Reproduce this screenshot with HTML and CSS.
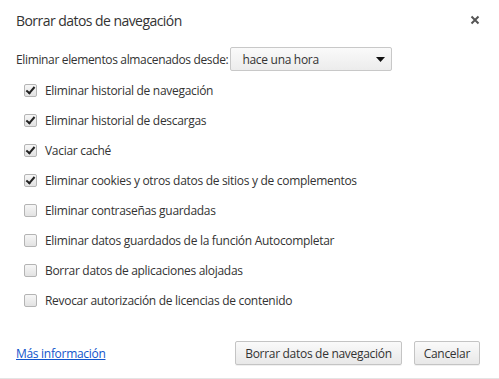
FILE: index.html
```html
<!DOCTYPE html>
<html lang="es">
<head>
    <meta charset="UTF-8">
    <title>Borrar datos de navegación</title>
    <link rel="stylesheet" href="styles.css">
</head>
<body>
<div class="dialog">
    <div class="dialog_header">
        <div class="dialog_title">Borrar datos de navegación</div>
        <div class="close_btn">
            <svg width="10" height="10" viewBox="0 0 10 10">
                <path d="M1.5 1.5 L8.5 8.5 M8.5 1.5 L1.5 8.5" stroke="#555555" stroke-width="2"/>
            </svg>
        </div>
    </div>

    <div class="period_row">
        <span class="period_label">Eliminar elementos almacenados desde:</span>
        <div class="select_box">
            <span>hace una hora</span>
            <svg width="9" height="5" viewBox="0 0 9 5"><path d="M0 0 L9 0 L4.5 5 Z" fill="#111111"/></svg>
        </div>
    </div>

    <div class="check_list">
        <label class="check_row"><span class="check_box checked"></span>Eliminar historial de navegación</label>
        <label class="check_row"><span class="check_box checked"></span>Eliminar historial de descargas</label>
        <label class="check_row"><span class="check_box checked"></span>Vaciar caché</label>
        <label class="check_row"><span class="check_box checked"></span>Eliminar cookies y otros datos de sitios y de complementos</label>
        <label class="check_row"><span class="check_box"></span>Eliminar contraseñas guardadas</label>
        <label class="check_row"><span class="check_box"></span>Eliminar datos guardados de la función Autocompletar</label>
        <label class="check_row"><span class="check_box"></span>Borrar datos de aplicaciones alojadas</label>
        <label class="check_row"><span class="check_box"></span>Revocar autorización de licencias de contenido</label>
    </div>

    <div class="dialog_footer">
        <a href="#" class="more_link">Más información</a>
        <div class="buttons">
            <button class="btn">Borrar datos de navegación</button>
            <button class="btn">Cancelar</button>
        </div>
    </div>
</div>
</body>
</html>
```

FILE: styles.css
```css
html, body {
    margin: 0;
    padding: 0;
    background-color: #ffffff;
}

body {
    font-family: "Open Sans", "Noto Sans", sans-serif;
    font-size: 12px;
    letter-spacing: -0.3px;
    color: #333333;
}

.dialog {
    width: 499px;
    height: 379px;
    box-sizing: border-box;
    padding: 0 19px 0 16px;
    display: flex;
    flex-direction: column;
    border-bottom: 1px solid #e4e4e4;
}

.dialog_header {
    display: flex;
    justify-content: space-between;
    align-items: center;
    height: 40px;
}

.dialog_title {
    font-size: 14px;
    letter-spacing: -0.55px;
    color: #333333;
}

.close_btn {
    width: 10px;
    height: 10px;
    display: flex;
}

.period_row {
    display: flex;
    align-items: center;
    margin-top: 7px;
    height: 24px;
}

.period_label {
    margin-right: 2px;
    letter-spacing: -0.35px;
}

.select_box {
    width: 162px;
    height: 24px;
    box-sizing: border-box;
    border: 1px solid #c8c8c8;
    border-radius: 2px;
    background: linear-gradient(#fafafa, #ececec);
    display: flex;
    align-items: center;
    justify-content: space-between;
    padding: 0 6px 0 11px;
    color: #333333;
}

.check_list {
    display: flex;
    flex-direction: column;
    margin-top: 4px;
    padding-left: 8px;
}

.check_row {
    display: flex;
    align-items: center;
    height: 30px;
}

.check_box {
    width: 13px;
    height: 13px;
    box-sizing: border-box;
    border: 1px solid #b4b4b4;
    border-radius: 2px;
    background: linear-gradient(#f6f6f6, #e2e2e2);
    margin-right: 8px;
    position: relative;
}

.check_box.checked::after {
    content: "";
    position: absolute;
    left: 3px;
    top: 0px;
    width: 3px;
    height: 7px;
    border: solid #222222;
    border-width: 0 2px 2px 0;
    transform: rotate(40deg);
}

.dialog_footer {
    display: flex;
    justify-content: space-between;
    align-items: center;
    margin-top: auto;
    margin-bottom: 13px;
}

.more_link {
    color: #1155cc;
    text-decoration: underline;
}

.buttons {
    display: flex;
    gap: 12px;
}

.btn {
    font-family: "Open Sans", "Noto Sans", sans-serif;
    font-size: 12px;
    letter-spacing: -0.3px;
    color: #333333;
    height: 24px;
    padding: 0 9px;
    border: 1px solid #c4c4c4;
    border-radius: 2px;
    background: linear-gradient(#fafafa, #e8e8e8);
    box-shadow: 0 1px 0 rgba(0, 0, 0, 0.06);
}
```
